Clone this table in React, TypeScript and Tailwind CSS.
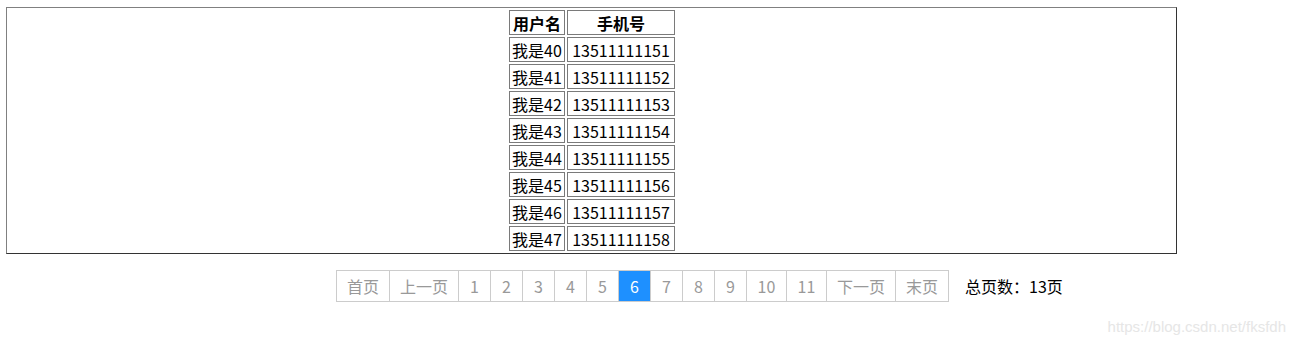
import React from 'react'

const users = Array.from({ length: 8 }, (_, i) => ({
  name: `我是${40 + i}`,
  phone: `135111111${51 + i}`,
}))

const pages = [
  { label: '首页', w: 'w-[53px]' },
  { label: '上一页', w: 'w-[69px]' },
  ...Array.from({ length: 11 }, (_, i) => ({
    label: String(i + 1),
    w: i + 1 >= 10 ? 'w-[40px]' : 'w-[32px]',
  })),
  { label: '下一页', w: 'w-[69px]' },
  { label: '末页', w: 'w-[53px]' },
]

const font = { fontFamily: '"Microsoft YaHei", "Noto Sans CJK SC", sans-serif' }

const Cell: React.FC<{ children: React.ReactNode; width: string; head?: boolean }> = ({
  children,
  width,
  head,
}) => (
  <div
    className={`${width} h-[25px] flex items-center justify-center border border-[#7a7a7a] text-[16px] leading-none text-black ${
      head ? 'font-bold' : ''
    }`}
  >
    {children}
  </div>
)

export default function App() {
  const current = 6

  return (
    <div className="w-[1296px] h-[345px] bg-white pt-[7px]" style={font}>
      {/* user list */}
      <div className="ml-[6px] w-[1171px] h-[247px] border border-t-[#808080] border-l-[#808080] border-r-[#333] border-b-[#333] flex justify-center pt-[2px]">
        <div className="flex flex-col gap-[2px] pl-[1px]">
          <div className="flex gap-[2px]">
            <Cell width="w-[56px]" head>用户名</Cell>
            <Cell width="w-[108px]" head>手机号</Cell>
          </div>
          {users.map((u) => (
            <div key={u.name} className="flex gap-[2px]">
              <Cell width="w-[56px]">{u.name}</Cell>
              <Cell width="w-[108px]">{u.phone}</Cell>
            </div>
          ))}
        </div>
      </div>

      {/* pager */}
      <div className="flex items-center mt-[16px] pl-[336px]">
        <div className="flex border-l border-[#cccccc]">
          {pages.map((p) => {
            const active = p.label === String(current)
            return (
              <div
                key={p.label}
                className={`${p.w} h-[32px] flex items-center justify-center border-y border-r border-[#cccccc] text-[16px] ${
                  active ? 'bg-[#1e90ff] text-white' : 'text-[#999999]'
                }`}
              >
                {p.label}
              </div>
            )
          })}
        </div>
        <span className="ml-[16px] text-[16px] text-black">总页数：13页</span>
      </div>

      <div className="flex justify-end pr-[10px] mt-[17px]">
        <span className="text-[15px] text-[#e6e6e6] leading-none" style={{ fontFamily: 'Arial, "Liberation Sans", sans-serif' }}>
          https://blog.csdn.net/fksfdh
        </span>
      </div>
    </div>
  )
}
